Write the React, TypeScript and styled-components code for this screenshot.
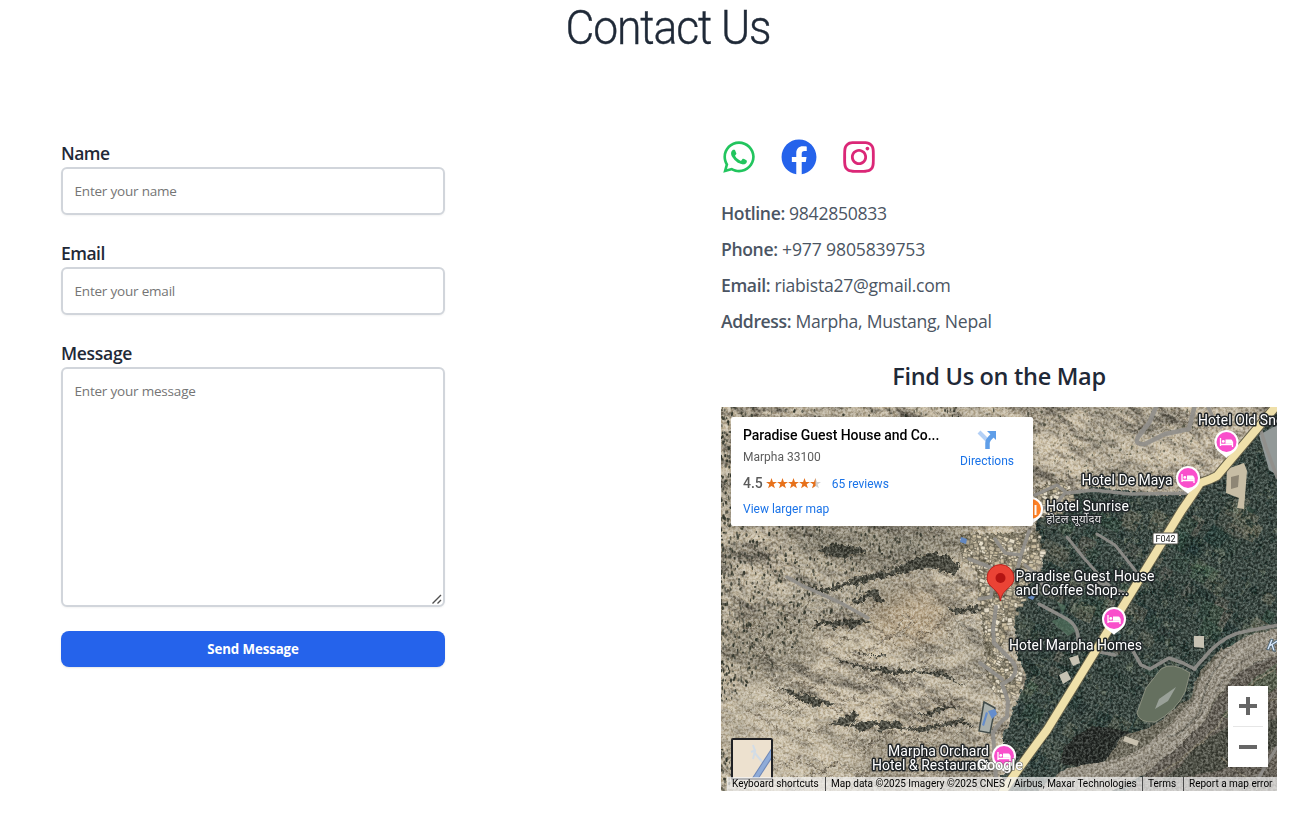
import React from "react";
import styled, { createGlobalStyle } from "styled-components";
import { FaWhatsapp, FaFacebook, FaInstagram } from "react-icons/fa";

const GlobalStyle = createGlobalStyle`
  *, *::before, *::after { box-sizing: border-box; }
  body {
    margin: 0;
    background: #fff;
    font-family: "Segoe UI", "Open Sans", "Noto Sans", sans-serif;
    overflow: hidden;
  }
`;

const Page = styled.main`
  width: 1302px;
  height: 831px;
  overflow: hidden;
  padding-left: 61px;
`;

const Title = styled.h1`
  margin: 0 0 83px;
  width: 1214px;
  height: 56px;
  font: 300 48px/56px Roboto, sans-serif;
  letter-spacing: -1.2px;
  text-align: center;
  color: #1f2937;
  -webkit-text-stroke: 0.4px #1f2937;
  transform: scaleX(0.925);
`;

const Columns = styled.div`
  display: flex;
  justify-content: space-between;
  width: 1216px;
`;

const Form = styled.form`
  display: flex;
  flex-direction: column;
  gap: 24px;
  width: 384px;
`;

const Field = styled.label`
  display: flex;
  flex-direction: column;
`;

const FieldName = styled.span<{ $track: number }>`
  font-size: 17.5px;
  line-height: 28px;
  height: 28px;
  font-weight: 600;
  letter-spacing: ${(p) => p.$track}px;
  color: #1f2937;
`;

const control = `
  display: block;
  width: 100%;
  border: 2px solid #d1d5db;
  border-radius: 6px;
  background: #fff;
  box-shadow: 0 1px 2px rgba(0, 0, 0, 0.05);
  font-family: "Segoe UI", "Open Sans", sans-serif;
  font-size: 13.5px;
  letter-spacing: -0.2px;
  outline: none;
  &::placeholder { color: #757575; opacity: 1; }
`;

const Input = styled.input`
  ${control}
  height: 48px;
  padding: 0 11.5px;
`;

const TextAreaBox = styled.div`
  position: relative;
  svg {
    position: absolute;
    right: 2px;
    bottom: 2px;
  }
`;

const TextArea = styled.textarea`
  ${control}
  height: 240px;
  padding: 12px 11.5px;
  line-height: 20px;
  resize: none;
`;

const Submit = styled.button`
  height: 36px;
  border: 0;
  border-radius: 8px;
  background: #2563eb;
  box-shadow: 0 1px 2px rgba(0, 0, 0, 0.1);
  color: #fff;
  font: 700 13.3px/20px "Segoe UI", "Open Sans", sans-serif;
  letter-spacing: -0.12px;
`;

const Info = styled.section`
  display: flex;
  flex-direction: column;
  width: 556px;
`;

const Socials = styled.div`
  display: flex;
  gap: 24px;
  height: 36px;
  margin-bottom: 24px;
`;

const Social = styled.a<{ $color: string }>`
  display: flex;
  justify-content: center;
  width: 36px;
  font-size: 36px;
  color: ${(p) => p.$color};
`;

const Details = styled.div`
  display: flex;
  flex-direction: column;
  gap: 8px;
`;

const Detail = styled.p<{ $track: number }>`
  margin: 0;
  height: 28px;
  font-size: 17.6px;
  line-height: 28px;
  letter-spacing: ${(p) => p.$track}px;
  color: #4b5563;
  white-space: nowrap;
  strong { font-weight: 600; letter-spacing: -0.38px; }
`;

const MapTitle = styled.h2`
  margin: 25px 0 15px;
  height: 32px;
  font-size: 23.5px;
  font-weight: 600;
  line-height: 32px;
  letter-spacing: -0.3px;
  text-align: center;
  color: #1f2937;
`;

const MapFrame = styled.div`
  position: relative;
  height: 384px;
  overflow: hidden;
  font-family: Roboto, sans-serif;
  & > svg { display: block; }
`;

const PlaceCard = styled.div`
  position: absolute;
  left: 10px;
  top: 10px;
  display: flex;
  justify-content: space-between;
  width: 302px;
  height: 109px;
  padding: 9px 19px 0 12px;
  border-radius: 2px;
  background: #fff;
  box-shadow: 0 1px 4px -1px rgba(0, 0, 0, 0.3);
`;

const PlaceText = styled.div`
  font-size: 12px;
  color: #5b5b5b;
  white-space: nowrap;
`;

const PlaceName = styled.div`
  height: 19px;
  font-size: 14px;
  font-weight: 500;
  line-height: 19px;
  letter-spacing: -0.05px;
  color: #000;
`;

const PlaceLine = styled.div`
  height: 16px;
  margin-top: 4px;
  line-height: 16px;
`;

const Rating = styled.div`
  display: flex;
  align-items: center;
  height: 16px;
  margin-top: 10px;
  svg { margin: 0 11px 0 3px; }
`;

const Score = styled.span`
  font-size: 14px;
  font-weight: 500;
`;

const MapLink = styled.a<{ $top?: number }>`
  display: block;
  margin-top: ${(p) => p.$top || 0}px;
  font-size: 12px;
  line-height: 16px;
  color: #1a73e8;
`;

const Directions = styled.div`
  display: flex;
  flex-direction: column;
  align-items: center;
  padding-top: 3px;
`;

const ZoomControls = styled.div`
  position: absolute;
  right: 9px;
  top: 279px;
  display: flex;
  flex-direction: column;
  align-items: center;
  width: 40px;
  height: 81px;
  background: #fff;
  box-shadow: 0 1px 4px -1px rgba(0, 0, 0, 0.3);
`;

const ZoomDivider = styled.span`
  width: 30px;
  height: 1px;
  background: #e6e6e6;
`;

const MiniMap = styled.div`
  position: absolute;
  left: 10px;
  top: 331px;
  width: 42px;
  height: 42px;
  border: 2px solid #202124;
  border-radius: 2px;
  overflow: hidden;
  svg { display: block; }
`;

const Attribution = styled.div`
  position: absolute;
  right: 0;
  bottom: 0;
  display: flex;
  width: 550px;
  height: 14px;
  background: rgba(245, 245, 245, 0.7);
  font-size: 10px;
  line-height: 14px;
  color: #000;
  white-space: nowrap;
`;

const Credit = styled.span<{ $width: number; $first?: boolean }>`
  width: ${(p) => p.$width}px;
  padding-left: 5px;
  border-left: ${(p) => (p.$first ? "0" : "1px solid #4a4a4a")};
`;

/* Seeded generator, so that the terrain is the same on every load. */
const random = (seed: number) => () => {
  seed = (seed + 0x6d2b79f5) | 0;
  let t = Math.imul(seed ^ (seed >>> 15), 1 | seed);
  t = (t + Math.imul(t ^ (t >>> 7), 61 | t)) ^ t;
  return ((t ^ (t >>> 14)) >>> 0) / 4294967296;
};

type Point = [number, number];

const inside = (x: number, y: number, poly: Point[]) => {
  let hit = false;
  for (let i = 0, j = poly.length - 1; i < poly.length; j = i++) {
    const [xi, yi] = poly[i];
    const [xj, yj] = poly[j];
    if (yi > y !== yj > y && x < ((xj - xi) * (y - yi)) / (yj - yi) + xi) hit = !hit;
  }
  return hit;
};

const points = (poly: Point[]) => poly.map((p) => p.join(",")).join(" ");

const orchard: Point[] = [
  [318, 96], [345, 88], [375, 80], [440, 88], [478, 84], [500, 62], [520, 40], [545, 12], [556, 0],
  [570, 0], [570, 400], [282, 400], [282, 330], [294, 300], [306, 270], [296, 248], [293, 210],
  [306, 180], [322, 160], [314, 130],
];
const village: Point[] = [
  [238, 128], [318, 124], [322, 140], [308, 167], [300, 195], [285, 222], [280, 246], [299, 264],
  [296, 284], [280, 292], [266, 270], [260, 200], [256, 164], [240, 148],
];
const upperVillage: Point[] = [[314, 82], [340, 72], [350, 90], [340, 104], [312, 112]];
const river: Point[] = [
  [570, 220], [556, 222], [526, 229], [502, 243], [483, 266], [472, 293], [452, 315], [426, 338],
  [396, 353], [346, 360], [310, 390], [382, 390], [425, 366], [455, 341], [480, 318], [496, 291],
  [512, 270], [532, 256], [570, 243],
];

const rnd = random(41);

const shrubs = Array.from({ length: 2300 }, () => {
  const x = Math.pow(rnd(), 1.5) * 310;
  const y = rnd() * 384;
  return { x, y, w: 1 + rnd() * 1.6, h: 1.6 + rnd() * 3, o: 0.5 + rnd() * 0.5 };
}).filter((s) => s.y < 190 + (1 - s.x / 300) * 110 - s.x * 0.42 || (s.y > 340 && s.x < 14));

const upperShrubs = Array.from({ length: 260 }, () => ({
  x: 312 + rnd() * 170,
  y: rnd() * 76,
  w: 0.7 + rnd() * 1.3,
  h: 1 + rnd() * 2,
}));

const plots = Array.from({ length: 170 }, () => ({
  x: 295 + rnd() * 255,
  y: 85 + rnd() * 270,
  w: 9 + rnd() * 19,
  h: 8 + rnd() * 15,
  kind: Math.floor(rnd() * 7),
  o: 0.3 + rnd() * 0.4,
}));
const plotColors = ["#5e6557", "#263b37", "#6f6f5e", "#344d41", "#4d6652", "#233431", "#6c675c"];

const houses = Array.from({ length: 2200 }, () => ({
  x: 236 + rnd() * 118,
  y: 70 + rnd() * 228,
  w: 2.5 + rnd() * 4,
  h: 2 + rnd() * 3,
  c: ["#e2d6bb", "#d1c4a6", "#efe7d4", "#c9bea5", "#b0a68f"][Math.floor(rnd() * 5)],
  r: rnd() * 50 - 15,
})).filter((h) => inside(h.x, h.y, village) || inside(h.x, h.y, upperVillage));

const trees = Array.from({ length: 1100 }, () => ({
  x: 285 + rnd() * 271,
  y: 20 + rnd() * 360,
  r: 0.9 + rnd() * 2.2,
})).filter((t) => inside(t.x, t.y, orchard) && !inside(t.x, t.y, river));

const gullies = Array.from({ length: 330 }, () => {
  const x = 20 + rnd() * 225;
  const y = 205 + rnd() * 175;
  const l = 8 + rnd() * 30;
  const s = rnd() < 0.45 ? -0.35 - rnd() * 0.5 : 0.15 + rnd() * 0.5;
  return { d: `M${x} ${y}q${l / 2} ${l * s * 0.2} ${l} ${l * s}`, dark: rnd() < 0.4, w: 0.6 + rnd() * 1.3 };
});

const ridges = [
  "M80 178L106 182L116 177L144 168L172 163L188 153L212 146L226 148L240 161L232 168L212 161L197 162L174 168L150 174L122 181L106 186Z",
  "M96 142L112 137L138 140L146 145L124 151L104 149Z",
  "M130 197L148 184L154 183L166 196L160 196L148 189L137 198Z",
  "M93 213L112 214L134 211L150 215L138 218L130 222L124 217L112 224L110 217L96 219Z",
  "M224 199L236 202L254 198L262 204L244 205L234 206Z",
  "M110 249L130 256L150 260L180 263L220 264L232 271L246 282L228 271L200 266L172 267L148 263L122 256Z",
  "M128 244L150 248L166 248L158 250L138 247Z",
  "M52 279L64 283L86 288L106 293L116 300L102 297L94 300L84 296L66 286Z",
  "M107 318L124 309L134 304L138 309L128 318L146 314L180 315L184 324L172 319L160 325L156 318L140 325L132 319Z",
  "M182 322L214 318L240 312L256 322L242 316L220 321L198 325Z",
  "M188 306L204 306L224 299L242 301L226 302L208 309Z",
];

const greyRoads: [string, number][] = [
  ["M436 -2L428 16L417 30Q413 38 424 37L444 27L468 22L474 -2", 4.5],
  ["M487 0L493 12L500 20M540 24L545 40L556 70", 3.5],
  ["M314 88L336 78L346 86L372 83L410 87L476 86M344 86L334 98L318 102", 3.5],
  ["M346 130L362 150L378 168L394 184M358 164L374 174L406 187M376 127L394 138L410 158L422 174", 3],
  ["M66 170L82 179L96 185L120 196L147 211", 3.5],
  ["M274 132L284 146L300 148L308 124M300 148L294 172L274 162L248 152M304 158L318 170L324 184M274 162L270 190L258 192", 3.5],
  ["M275 200L272 222L273 236L288 251Q300 262 290 272L281 277L287 294L286 310Q278 315 272 326L275 372M259 256L281 272", 4],
  ["M318 197L344 211Q358 218 357 234L379 245L394 248M409 239L420 258L429 262L448 251L462 256L474 262", 3.5],
  ["M558 218L526 224Q506 227 490 243L473 262", 3.5],
  ["M538 370L556 340", 3],
];

function HotelPin({ x, y }: { x: number; y: number }) {
  return (
    <g transform={`translate(${x} ${y})`}>
      <path d="M0 15C-3 11-12 9-12-1A12 12 0 0 1 12-1C12 9 3 11 0 15Z" fill="#fff" />
      <circle cy="-1" r="10" fill="#f94fcb" />
      <path d="M-6-5v8M-6 1.500H6V4M6 1.500v-3" fill="none" stroke="#fff" strokeWidth="1.300" />
      <circle cx="-3.200" cy="-1.600" r="1.400" fill="#fff" />
      <path d="M-1-3.500H4.500Q6-3.500 6-1.500V.8H-1Z" fill="#fff" />
    </g>
  );
}

const Label = styled.text`
  font: 400 14px Roboto, sans-serif;
  fill: #fff;
  stroke: #202528;
  stroke-width: 3px;
  stroke-linejoin: round;
  paint-order: stroke;
`;

const HindiLabel = styled(Label)`
  font: 400 11.5px "Noto Sans Devanagari", "Noto Sans", FreeSans, sans-serif;
  fill: #e4e4e4;
  stroke-width: 2px;
`;

const Grain = styled.rect`
  mix-blend-mode: soft-light;
`;

function SatelliteMap() {
  const highway = "M562 -9L496 69Q489 73 479 76Q475 83 461 103L412 183L326 323Q310 344 282 384";
  return (
    <svg width="556" height="384" viewBox="0 0 556 384">
      <defs>
        <filter id="grain" x="0" y="0" width="100%" height="100%" colorInterpolationFilters="sRGB">
          <feTurbulence type="fractalNoise" baseFrequency="0.4" numOctaves="3" seed="4" />
          <feColorMatrix values="2.600 0 0 0 -.8  2.600 0 0 0 -.8  2.600 0 0 0 -.8  0 0 0 0 1" />
        </filter>
        <filter id="relief" x="0" y="0" width="100%" height="100%" colorInterpolationFilters="sRGB">
          <feTurbulence type="fractalNoise" baseFrequency="0.022 0.028" numOctaves="6" seed="27" />
          <feColorMatrix values="0 0 0 0 0  0 0 0 0 0  0 0 0 0 0  1 0 0 0 0" />
          <feDiffuseLighting surfaceScale="8" diffuseConstant="1.080" lightingColor="#cfc4ae">
            <feDistantLight azimuth="250" elevation="57" />
          </feDiffuseLighting>
        </filter>
        <filter id="patches" x="0" y="0" width="100%" height="100%">
          <feTurbulence type="fractalNoise" baseFrequency="0.014" numOctaves="3" seed="9" />
          <feColorMatrix values="0 0 0 0 .2  0 0 0 0 .2  0 0 0 0 .17  2.200 0 0 0 -.9" />
        </filter>
        <filter id="rough" x="-10%" y="-20%" width="120%" height="140%">
          <feTurbulence type="fractalNoise" baseFrequency="0.22" numOctaves="3" seed="3" />
          <feDisplacementMap in="SourceGraphic" scale="9" xChannelSelector="R" yChannelSelector="G" />
          <feGaussianBlur stdDeviation="0.5" />
        </filter>
        <filter id="bank" x="-10%" y="-10%" width="120%" height="120%">
          <feTurbulence type="fractalNoise" baseFrequency="0.06" numOctaves="2" seed="8" />
          <feDisplacementMap in="SourceGraphic" scale="5" xChannelSelector="R" yChannelSelector="G" />
          <feGaussianBlur stdDeviation="0.7" />
        </filter>
        <filter id="soft"><feGaussianBlur stdDeviation="0.6" /></filter>
        <filter id="haze" x="-30%" y="-30%" width="160%" height="160%"><feGaussianBlur stdDeviation="10" /></filter>
        <pattern id="rows" width="4" height="4" patternUnits="userSpaceOnUse" patternTransform="rotate(24)">
          <rect x=".5" y=".5" width="2" height="2" fill="#152823" />
        </pattern>
        <clipPath id="orchardClip"><polygon points={points(orchard)} /></clipPath>
        <clipPath id="riverClip"><polygon points={points(river)} /></clipPath>
      </defs>

      <rect width="556" height="384" fill="#b0a691" />
      <g transform="rotate(28 200 200)">
        <rect x="-120" y="-200" width="800" height="760" filter="url(#relief)" opacity=".8" />
      </g>
      <rect width="556" height="384" filter="url(#patches)" opacity=".3" />
      <g filter="url(#haze)">
        <path d="M0 290L60 270L110 318L190 326L250 330V384H0Z" fill="#d0c6b0" opacity=".5" />
        <path d="M90 225L150 215L190 250L110 245Z" fill="#d5cab2" opacity=".5" />
        <ellipse cx="188" cy="210" rx="38" ry="26" fill="#b5a282" opacity=".65" />
        <ellipse cx="50" cy="238" rx="52" ry="32" fill="#7d786a" opacity=".5" />
        <path d="M60 115H250V150L160 165L80 150Z" fill="#6f6e60" opacity=".5" />
        <path d="M130 330L250 318V384H140Z" fill="#7d7566" opacity=".45" />
        <path d="M130 185L175 175L190 195L150 205Z" fill="#6a665a" opacity=".5" />
      </g>
      <g filter="url(#rough)" fill="none">
        {gullies.map((g, i) => (
          <path key={i} d={g.d} stroke={g.dark ? "#625a4b" : "#dcd2bd"} strokeWidth={g.w} opacity=".5" />
        ))}
      </g>
      <g filter="url(#rough)" fill="#33352d" opacity=".8">
        {ridges.map((d, i) => <path key={i} d={d} />)}
      </g>

      <polygon points={points(orchard)} fill="#3f4d47" filter="url(#rough)" />
      <g clipPath="url(#orchardClip)">
        <g filter="url(#soft)">
          {plots.map((p, i) => (
            <rect key={i} x={p.x} y={p.y} width={p.w} height={p.h} fill={plotColors[p.kind]} opacity={p.o}
              transform={`rotate(${24 + (i % 3) * 6} ${p.x} ${p.y})`} />
          ))}
        </g>
        <rect x="280" width="276" height="384" fill="url(#rows)" opacity=".45" />
        <g filter="url(#rough)">
          {trees.map((t, i) => (
            <circle key={i} cx={t.x} cy={t.y} r={t.r} fill={i % 4 ? "#1e312b" : "#66715f"} opacity=".6" />
          ))}
        </g>
      </g>
      <g filter="url(#bank)">
        <path d="M342 340L370 318L410 326L402 350L364 360L338 356Z" fill="#282c27" opacity=".9" />
        <path d="M400 330L428 322L470 290L480 262L500 240L520 300L430 350L380 360Z" fill="#716e60" />
        <path d="M570 243L532 256L512 270L480 318L425 366L392 394H570Z" fill="#68645a" />
        <path d="M556 256L528 276L500 310L520 312L556 280Z" fill="#59614f" />
        <path d="M480 336L510 318L556 312V340L500 362L440 376Z" fill="#4b4e43" opacity=".85" />
        <polygon points={points(river)} fill="#969083" />
      </g>
      <g clipPath="url(#riverClip)">
        <g filter="url(#bank)" fill="none" strokeWidth="2">
          <path d="M556 230Q510 240 493 270T453 324T360 370" stroke="#aca698" />
          <path d="M556 238Q520 247 501 276T466 326T380 378" stroke="#7e796e" />
          <path d="M510 244Q488 265 482 292T446 330" stroke="#78756a" />
          <path d="M528 240Q500 262 492 288T440 348" stroke="#a59f92" />
        </g>
      </g>
      <g filter="url(#bank)" fill="none" stroke="#88826f" strokeWidth="1.500" opacity=".8">
        <path d="M556 262Q526 274 506 306T430 372M556 290Q530 300 512 325M540 384L500 350" />
      </g>

      <polygon points={points(village)} fill="#6d6756" filter="url(#rough)" opacity=".8" />
      <polygon points={points(upperVillage)} fill="#6d6756" filter="url(#rough)" opacity=".8" />
      <Grain width="556" height="384" filter="url(#grain)" opacity=".55" />
      {shrubs.map((s, i) => (
        <ellipse key={i} cx={s.x} cy={s.y} rx={s.w / 2} ry={s.h / 2} fill="#2f3329" opacity={s.o} />
      ))}
      {upperShrubs.map((s, i) => (
        <ellipse key={i} cx={s.x} cy={s.y} rx={s.w / 1.8} ry={s.h / 2} fill="#484b3c" opacity=".7" />
      ))}
      {houses.map((h, i) => (
        <rect key={i} x={h.x} y={h.y} width={h.w} height={h.h} fill={h.c} stroke="#5d584a" strokeWidth=".5"
          opacity=".9" transform={`rotate(${h.r} ${h.x} ${h.y})`} />
      ))}
      <g filter="url(#soft)">
        <path d="M440 262Q451 254 469 266L464 285Q455 304 434 315Q418 316 416 306L425 281Z" fill="#65705f" stroke="#8b8f7f" />
        <path d="M438 292L455 280L447 294L434 302Z" fill="#a6ada6" opacity=".8" />
        <path d="M404 329L418 334L416 339L402 334Z" fill="#c8c1af" />
        <path d="M506 62l17-6 3 8-3 38-7-1 2-10-13-5Z" fill="#c7bda5" />
        <path d="M510 70l8-2-1 12-7 2Z" fill="#8e8674" />
        <path d="M538 28l18-10v50l-8-5Z" fill="#929998" />
        <path d="M473 229h10v12l-10-1ZM338 268l8-4 4 8-8 5ZM348 251l9-3 2 8-7 3Z" fill="#c7c2b3" />
        <path d="M330 214l16-5 10 14-9 6ZM336 195l9 4-3 8Z" fill="#55735f" opacity=".7" />
      </g>

      <path d="M258 324L263 295L274 301L269 326Z" fill="#aab0ab" stroke="#424b49" strokeWidth="1.500" />
      <path d="M267 304l7-2 2 5-5 5ZM261 318l4-13 2 1-4 13Z" fill="#658dcc" />
      <path d="M240 130l6 2-1 5-6-2ZM308 188l6 1-2 4-5-2Z" fill="#6387bf" />
      <g fill="none" strokeLinejoin="round" strokeLinecap="round">
        {greyRoads.map(([d, w]) => (
          <path key={d} d={d} stroke="#918f8b" strokeWidth={w} opacity=".92" />
        ))}
        <path d={highway} stroke="#66614b" strokeWidth="10" />
        <path d={highway} stroke="#efe0aa" strokeWidth="8" />
      </g>

      <rect x="432" y="126" width="25" height="11" rx="1" fill="#fff" stroke="#55534b" />
      <text x="444.500" y="135" textAnchor="middle" fontFamily="Roboto" fontSize="9" fill="#222">F042</text>

      <g transform="translate(310 103)">
        <path d="M0 15C-3 11-12 9-12-1A12 12 0 0 1 12-1C12 9 3 11 0 15Z" fill="#fff" />
        <circle cy="-1" r="10" fill="#ff8126" />
        <path d="M4.500-5v10" stroke="#fff" strokeWidth="2" />
      </g>
      <HotelPin x={505.5} y={36} />
      <HotelPin x={467} y={72} />
      <HotelPin x={393} y={213} />
      <HotelPin x={283} y={350} />

      <Label x="477" y="18" textLength="86">Hotel Old Sno</Label>
      <Label x="360.500" y="78" textLength="91">Hotel De Maya</Label>
      <Label x="325" y="104" textLength="83">Hotel Sunrise</Label>
      <HindiLabel x="325" y="115.500" textLength="55">होटल सूर्योदय</HindiLabel>
      <Label x="294.500" y="174" textLength="139">Paradise Guest House</Label>
      <Label x="294.500" y="188" textLength="113">and Coffee Shop...</Label>
      <Label x="288" y="243" textLength="133">Hotel Marpha Homes</Label>
      <Label x="167" y="349" textLength="101">Marpha Orchard</Label>
      <Label x="151" y="363" textLength="117">Hotel &amp; Restaurant</Label>
      <text x="546" y="242" fontFamily="Roboto" fontStyle="italic" fontSize="14" fill="#dcecff" stroke="#566b78" strokeWidth="2" paintOrder="stroke" transform="rotate(12 546 242)">K</text>
      <text x="256" y="363" fontFamily="Roboto" fontWeight="500" fontSize="14.500" fill="#fff" stroke="#6b6b66" strokeWidth="1.200" paintOrder="stroke" textLength="46">Google</text>

      <path d="M279.500 194C278 181 266 181 266 171A13.500 13.500 0 0 1 293 171C293 181 281 181 279.500 194Z" fill="#ea4335" stroke="#b31412" strokeWidth=".8" />
      <circle cx="279.500" cy="171" r="5" fill="#b31412" />
    </svg>
  );
}

const star = "M5.500 0L6.900 3.900H11L7.700 6.300L8.900 10.300L5.500 7.900L2.100 10.300L3.300 6.300L0 3.900H4.100Z";

function Stars() {
  return (
    <svg width="55" height="11" viewBox="0 0 55 11">
      <defs><clipPath id="half"><rect width="49.500" height="11" /></clipPath></defs>
      <path d={star} transform="translate(44 0)" fill="#cfcfcf" />
      <g fill="#e7711b" clipPath="url(#half)">
        {[0, 11, 22, 33, 44].map((x) => <path key={x} d={star} transform={`translate(${x} 0)`} />)}
      </g>
    </svg>
  );
}

function ZoomIcon({ plus }: { plus?: boolean }) {
  return (
    <svg width="40" height="40" viewBox="0 0 40 40">
      <path d={plus ? "M11 18h7v-7h4v7h7v4h-7v7h-4v-7h-7Z" : "M11 18h18v4H11Z"} fill="#666" />
    </svg>
  );
}

export default function App() {
  return (
    <>
      <GlobalStyle />
      <Page>
        <Title>Contact Us</Title>
        <Columns>
          <Form>
            <Field>
              <FieldName $track={-0.5}>Name</FieldName>
              <Input placeholder="Enter your name" />
            </Field>
            <Field>
              <FieldName $track={-0.5}>Email</FieldName>
              <Input placeholder="Enter your email" />
            </Field>
            <Field>
              <FieldName $track={-0.3}>Message</FieldName>
              <TextAreaBox>
                <TextArea placeholder="Enter your message" />
                <svg width="12" height="12" viewBox="0 0 12 12">
                  <path d="M1.500 10.500L10 2M6.500 10.500L10 7" stroke="#4f4f4f" strokeWidth="1.400" />
                </svg>
              </TextAreaBox>
            </Field>
            <Submit type="button">Send Message</Submit>
          </Form>
          <Info>
            <Socials>
              <Social $color="#22c55e"><FaWhatsapp /></Social>
              <Social $color="#2563eb"><FaFacebook /></Social>
              <Social $color="#db2777"><FaInstagram /></Social>
            </Socials>
            <Details>
              <Detail $track={-0.3}><strong>Hotline:</strong> 9842850833</Detail>
              <Detail $track={-0.15}><strong>Phone:</strong> +977 9805839753</Detail>
              <Detail $track={-0.26}><strong>Email:</strong> riabista27@gmail.com</Detail>
              <Detail $track={-0.26}><strong>Address:</strong> Marpha, Mustang, Nepal</Detail>
            </Details>
            <MapTitle>Find Us on the Map</MapTitle>
            <MapFrame>
              <SatelliteMap />
              <PlaceCard>
                <PlaceText>
                  <PlaceName>Paradise Guest House and Co...</PlaceName>
                  <PlaceLine>Marpha 33100</PlaceLine>
                  <Rating>
                    <Score>4.5</Score>
                    <Stars />
                    <MapLink $top={1}>65 reviews</MapLink>
                  </Rating>
                  <MapLink $top={10}>View larger map</MapLink>
                </PlaceText>
                <Directions>
                  <svg width="22" height="22" viewBox="0 0 22 22">
                    <path d="M3 3l8 8" stroke="#b3d0f6" strokeWidth="4" />
                    <path d="M11.500 20v-6q0-3 5-7.500" fill="none" stroke="#5f9ee8" strokeWidth="4.500" />
                    <path d="M11 2h9v9Z" fill="#5f9ee8" />
                  </svg>
                  <MapLink $top={2}>Directions</MapLink>
                </Directions>
              </PlaceCard>
              <MiniMap>
                <svg width="38" height="38" viewBox="0 0 38 38">
                  <rect width="38" height="38" fill="#ede1cf" />
                  <path d="M20 5l2 6-2 8M21 12l10 12M18 12l5-2" fill="none" stroke="#d2dce6" strokeWidth="2" />
                  <path d="M20 42L42 8" stroke="#6e86b5" strokeWidth="6" />
                  <path d="M20 42L42 8" stroke="#8eabd8" strokeWidth="4" />
                </svg>
              </MiniMap>
              <ZoomControls>
                <ZoomIcon plus />
                <ZoomDivider />
                <ZoomIcon />
              </ZoomControls>
              <Attribution>
                <Credit $width={98} $first>Keyboard shortcuts</Credit>
                <Credit $width={317}>Map data ©2025 Imagery ©2025 CNES / Airbus, Maxar Technologies</Credit>
                <Credit $width={41}>Terms</Credit>
                <Credit $width={94}>Report a map error</Credit>
              </Attribution>
            </MapFrame>
          </Info>
        </Columns>
      </Page>
    </>
  );
}
